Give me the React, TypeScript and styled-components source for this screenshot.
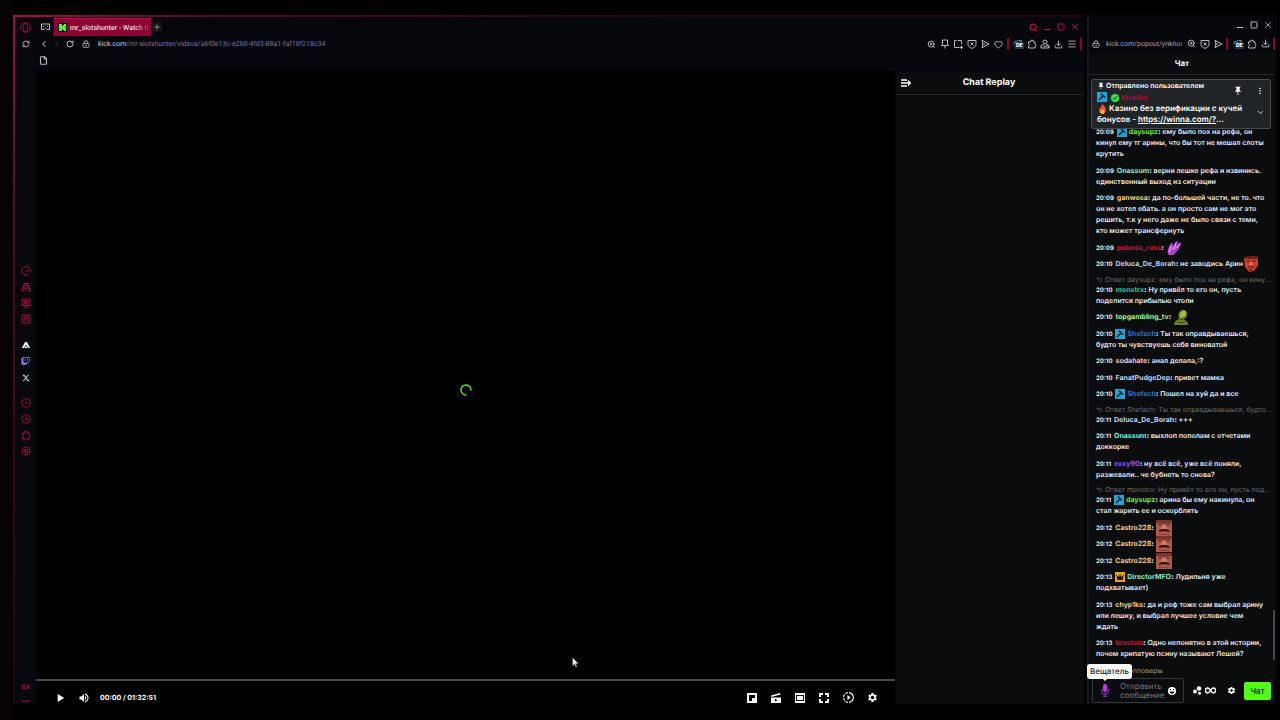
import React from "react";
import styled, { createGlobalStyle, css } from "styled-components";
import {
  RefreshCw, RotateCw, ChevronLeft, ChevronRight, ChevronDown, LockKeyhole, File, Plus, Search,
  Square, X, ZoomIn, Heart, Download, Menu, Undo2,
} from "lucide-react";
import { MdPlayArrow, MdVolumeUp, MdSettings, MdSlowMotionVideo, MdVerified, MdPushPin, MdMoreVert } from "react-icons/md";
import { FaTwitch, FaXTwitter, FaCrown } from "react-icons/fa6";

const Global = createGlobalStyle`
  * { box-sizing: border-box; }
  body {
    margin: 0;
    background: #000;
    color: #fff;
    font-family: Inter, "Noto Sans", sans-serif;
    text-rendering: geometricPrecision;
    overflow: hidden;
  }
  svg { display: block; flex: none; }
  button { font-family: inherit; }
`;

const red = "#b3083c";
const chromeFont = css`
  font-family: Roboto, Inter, sans-serif;
`;

const Desktop = styled.main`
  min-height: 100vh;
  padding: 15px 3px 16px 13px;
  display: grid;
  grid-template-columns: minmax(0, 1fr) 190px;
  gap: 3px;
  background: linear-gradient(90deg, #070305, #070305 13px, #000 13px);
`;

const MainWindow = styled.section`
  display: grid;
  grid-template-columns: 21px minmax(0, 1fr);
  background: #06060d;
  border: 0 solid;
  border-width: 2px 0 0 2px;
  border-image: linear-gradient(135deg, #a80c3e, #4a0c22 12%, #20060f 40%, #200610) 1;
`;

const IconButton = styled.button<{ $color?: string; $w?: number }>`
  display: flex;
  align-items: center;
  justify-content: center;
  width: ${(p) => p.$w ?? 10}px;
  height: 10px;
  padding: 0;
  border: 0;
  background: none;
  color: ${(p) => p.$color ?? "#b9bac2"};
  position: relative;
  flex: none;
`;

const Sidebar = styled.nav`
  display: grid;
  grid-template-rows: 1fr auto 1fr;
  justify-items: center;
  background: #07070d;
`;
const SideTop = styled.div`
  display: flex;
  flex-direction: column;
  gap: 7px;
  padding-top: 5px;
`;
const SideMiddle = styled.div`
  display: flex;
  flex-direction: column;
  gap: 15px;
  padding-top: 1px;
`;
const SideGroup = styled.div<{ $h: number }>`
  height: ${(p) => p.$h}px;
  display: flex;
  flex-direction: column;
  justify-content: space-between;
`;
const SideBottom = styled.div`
  align-self: end;
  display: flex;
  flex-direction: column;
  align-items: center;
  gap: 8px;
  color: ${red};
  font-size: 6px;
  line-height: 8px;
  font-weight: 700;
  span:last-child { line-height: 4px; }
`;

const Content = styled.div`
  display: grid;
  grid-template-rows: 20px 15px 19px minmax(0, 1fr);
`;
const TabBar = styled.header`
  display: flex;
  align-items: center;
  padding: 0 4px;
  gap: 5px;
`;
const Tab = styled.a`
  display: flex;
  align-items: center;
  gap: 3px;
  width: 97px;
  height: 18px;
  margin-left: -1px;
  padding: 0 4px;
  background: #8c0432;
  border-top: 1px solid #c00c48;
  color: #f2dfe6;
  font-size: 7px;
  font-weight: 500;
  text-decoration: none;
  white-space: nowrap;
  ${chromeFont}
`;
const TabTitle = styled.span`
  mask-image: linear-gradient(90deg, #000 80%, transparent);
`;
const NewTab = styled(IconButton)`
  background: #15151e;
  border-radius: 2px;
  margin-left: -4px;
`;
const WindowButtons = styled.div<{ $red?: boolean }>`
  margin-left: auto;
  display: flex;
  gap: 4px;
  padding-right: ${(p) => (p.$red ? "0" : "2px")};
  ${IconButton} { color: ${(p) => (p.$red ? "#c40a42" : "#b9bac2")}; }
`;
const AddressBar = styled.div`
  display: flex;
  align-items: center;
  padding: 0 0 1px 3px;
`;
const NavButtons = styled.div`
  display: flex;
  gap: 3px;
`;
const Url = styled.span`
  flex: 1;
  min-width: 0;
  padding-left: 4px;
  overflow: hidden;
  white-space: nowrap;
  font-size: 7px;
  line-height: 10px;
  color: #7b74a6;
  ${chromeFont}
  b { font-weight: 400; color: #d0d0da; }
`;
const PopUrl = styled(Url)`
  padding-left: 6px;
  color: #a3a2b8;
  margin-right: 4px;
`;
const ToolGroup = styled.div<{ $w: number }>`
  width: ${(p) => p.$w}px;
  display: flex;
  justify-content: space-between;
`;
const Divider = styled.span<{ $gap: number }>`
  width: 2px;
  height: 12px;
  background: #8c0432;
  margin: 0 ${(p) => p.$gap}px 0 3px;
`;
const Flag = styled.span`
  position: absolute;
  left: 2px;
  top: 3px;
  padding: 0 1px;
  background: #263747;
  color: #fff;
  font-size: 5px;
  line-height: 7px;
  font-weight: 800;
`;
const Bookmarks = styled.div`
  display: flex;
  align-items: center;
  padding: 0 2px 2px;
`;

const Page = styled.div`
  display: grid;
  grid-template-columns: minmax(0, 1fr) 189px;
`;
const Player = styled.section`
  position: relative;
  display: grid;
  grid-template-rows: minmax(0, 1fr) 25px;
  background: #000;
  border-radius: 4px 0 0 0;
`;
const Stage = styled.div`
  display: flex;
  align-items: center;
  justify-content: center;
  padding-top: 29px;
`;
const Controls = styled.div`
  display: flex;
  align-items: center;
  border-top: 2px solid #4b4b4b;
  padding: 10px 17px 0 18px;
`;
const PlayerButtons = styled.div`
  display: flex;
  gap: 12px;
  ${IconButton} { color: #fff; }
`;
const Time = styled.span`
  font-size: 7px;
  line-height: 12px;
  font-weight: 700;
  padding-left: 10px;
  flex: 1;
`;
const Cursor = styled.svg`
  position: absolute;
  left: 536px;
  top: 586px;
`;
const Replay = styled.aside`
  background: #0b0c0e;
  border-left: 1px solid #050506;
`;
const ReplayHead = styled.header`
  display: grid;
  grid-template-columns: 20px 1fr 22px;
  align-items: center;
  height: 24px;
  border-bottom: 1px solid #222528;
  h2 { margin: 0; font-size: 9px; line-height: 12px; text-align: center; }
`;

const Popup = styled.section`
  display: grid;
  grid-template-columns: minmax(0, 1fr);
  grid-template-rows: 20px 18px 22px minmax(0, 1fr) 44px;
  height: calc(100vh - 31px);
  background: #0b0c0e;
  border-left: 2px solid #17171b;
  border-right: 2px solid #060608;
`;
const PopTitleBar = styled.header`
  display: flex;
  align-items: center;
  background: #06060d;
`;
const PopAddress = styled(AddressBar)`
  background: #06060d;
`;
const ChatTitle = styled.h2`
  margin: 0;
  font-size: 8px;
  line-height: 21px;
  text-align: center;
  border-bottom: 1px solid #222528;
`;
const ChatArea = styled.div`
  position: relative;
  overflow: hidden;
  padding: 1px 7px 0;
`;
const Scrollbar = styled.span`
  position: absolute;
  right: 0;
  bottom: 0;
  width: 2px;
  height: 50px;
  background: #43464a;
`;
const PinCard = styled.div`
  position: absolute;
  z-index: 1;
  left: 2px;
  right: 4px;
  top: 4px;
  height: 50px;
  display: grid;
  grid-template-columns: minmax(0, 1fr) auto;
  padding: 0 5px;
  background: #202427;
  border: 1px solid #454b50;
  border-radius: 2px;
  font-size: 8px;
  line-height: 11px;
  font-weight: 600;
  white-space: nowrap;
  a { color: inherit; }
`;
const PinHead = styled.div`
  display: flex;
  align-items: center;
  gap: 1px;
  font-size: 7px;
  line-height: 12px;
`;
const PinActions = styled.div`
  display: grid;
  grid-template-columns: 10px 10px;
  column-gap: 12px;
  align-content: space-between;
  padding: 6px 0 11px;
  ${IconButton} { color: #fff; }
  ${IconButton}:last-child { grid-column: 2; }
`;
const PinLine = styled.div`
  display: flex;
  align-items: center;
  gap: 1px;
`;
const Messages = styled.ol`
  list-style: none;
  margin: 0;
  padding: 45px 0 0;
  font-size: 7px;
  line-height: 11px;
`;
const Item = styled.li`
  white-space: pre;
  font-weight: 600;
  color: #ececee;
  margin-top: 5px;
  &:nth-child(even) { margin-top: 6px; }
`;
const Stamp = styled.time`
  font-size: 6px;
  line-height: 8px;
  font-weight: 700;
  margin-right: 3px;
`;
const User = styled.b<{ $c: string }>`
  color: ${(p) => p.$c};
  font-size: 7px;
  font-weight: 700;
`;
const inlineArt = css`
  display: inline-block;
  vertical-align: middle;
`;
const Badge = styled.span<{ $bg: string }>`
  ${inlineArt}
  width: 10px;
  height: 10px;
  padding: 1px;
  margin: -2px 2px -1px 0;
  background: ${(p) => p.$bg};
  color: #14120a;
`;
const Emote = styled.span`
  ${inlineArt}
  margin: -4px 0 -4px 0;
`;
const Reply = styled.div`
  display: flex;
  align-items: center;
  gap: 2px;
  height: 9px;
  font-size: 7px;
  font-weight: 400;
  line-height: 9px;
  color: #6a6c70;
`;

const Composer = styled.form`
  display: flex;
  flex-direction: column;
  position: relative;
  padding: 0 4px 1px 3px;
`;
const Mode = styled.p`
  margin: 0;
  height: 19px;
  padding: 6px 0 0 31px;
  font-size: 7px;
  line-height: 10px;
  color: #94969a;
`;
const Tooltip = styled.span`
  position: absolute;
  left: -2px;
  top: 4px;
  padding: 0 3px;
  border-radius: 3px;
  background: #fff;
  color: #1c1d20;
  font-size: 8px;
  line-height: 15px;
  font-weight: 500;
  &::after {
    content: "";
    position: absolute;
    left: 16px;
    top: 15px;
    border: 2px solid transparent;
    border-top-color: #fff;
  }
`;
const InputRow = styled.div`
  display: flex;
  align-items: center;
  flex: 1;
`;
const InputBox = styled.label`
  display: flex;
  align-items: center;
  width: 92px;
  height: 25px;
  padding: 0 7px;
  gap: 1px;
  border: 1px solid #33373b;
  border-radius: 2px;
`;
const Field = styled.textarea`
  flex: 1;
  min-width: 0;
  height: 18px;
  padding: 0 0 0 9px;
  border: 0;
  resize: none;
  overflow: hidden;
  background: none;
  color: #fff;
  font: 400 8px/9px Inter, sans-serif;
  text-rendering: inherit;
  &::placeholder { color: #777a7f; opacity: 1; }
`;
const Extras = styled.div`
  display: flex;
  align-items: center;
  gap: 2px;
  flex: 1;
  padding: 0 8px;
  ${IconButton} { color: #fff; }
  ${IconButton}:last-child { margin-left: auto; }
`;
const Send = styled.button`
  width: 27px;
  height: 18px;
  padding: 0;
  border: 0;
  border-radius: 2px;
  background: #53fc18;
  color: #0b1a06;
  font-size: 8px;
  font-weight: 500;
`;

const Line = ({ size = 10, children }: { size?: number; children: React.ReactNode }) => (
  <svg width={size} height={size} viewBox="0 0 10 10" fill="none" stroke="currentColor" strokeWidth="1">{children}</svg>
);
const PuzzleIcon = () => (
  <Line><path d="M1.500 3h2.200a1.400 1.400 0 1 1 2.600 0h1.700v2a1.200 1.200 0 0 1 0 2.300V9H1.500V7.200a1.200 1.200 0 0 0 0-2.300z" /></Line>
);
const ShareIcon = () => <Line><path d="M2 1.300L9 5 2 8.700 2.800 5zM2.800 5h2.700" /></Line>;
const ShieldIcon = () => <Line><path d="M1 1.500h8v3.800C9 7.500 7 8.800 5 9.300 3 8.800 1 7.500 1 5.300zM3.500 3.500l3 3M6.500 3.500l-3 3" /></Line>;
const PinIcon = () => <Line><path d="M2.500 1h5v4l1 1.500h-7l1-1.500zM5 6.500V9.500" /></Line>;
const SnapshotIcon = () => <Line><path d="M3.500 1.500H1.500v7h5M5 1.500h3.500V5.500" /><path d="M7 8.500h3M8.500 7v3" /></Line>;
const ProfileIcon = () => <Line><circle cx="5" cy="3" r="2" /><path d="M1 9V6.500L3.500 5.500M6.500 5.500L9 6.500V9zM1 9h8M3.500 7.300h3" /></Line>;

const Hammer = () => (
  <svg width="8" height="8" viewBox="0 0 8 8"><path d="M3.500 0L7.800 4.300 6.300 5 5.200 3.900 1.500 7.600.4 6.500 4.100 2.800 2.300 1.200z" fill="#07222e" /></svg>
);
const Mod = () => <Badge $bg="#1fa5d8"><Hammer /></Badge>;
const Host = () => <Badge $bg="#f0a414"><FaCrown size={8} /></Badge>;

const Claws = () => (
  <svg width="16" height="16" viewBox="0 0 16 16">
    <path d="M2 14C1 10 3 7 5 3l2 1-1 4 4-7 2 1-2 5 4-5 1 2-3 6-5 5-4 0z" fill="#c44be8" />
    <path d="M3 12l3-6M6 12l4-8M9 11l4-7" stroke="#f3a9ff" fill="none" />
    <path d="M5 14l2-4M8 12l3-4" stroke="#6a1894" fill="none" />
  </svg>
);
const RedFace = () => (
  <svg width="16" height="16" viewBox="0 0 16 16">
    <path d="M1 1l14-1v9l-4 6-5 1-4-5z" fill="#c9402e" />
    <path d="M1 1l14-1v3H2z" fill="#6e1d18" />
    <path d="M3 5h4M9 5h4M5 11h6" stroke="#5d1512" strokeWidth="1.200" />
    <path d="M7 6l-1 3h4l-1-3z" fill="#ea7456" />
    <path d="M5 13h5l-1 2H7z" fill="#7a221a" />
  </svg>
);
const Frog = () => (
  <svg width="16" height="16" viewBox="0 0 16 16">
    <path d="M1 16c0-3 2-5 5-6-1-4-1-7 3-9 3-1 5 1 5 4s-2 5-4 6c3 0 5 2 5 5z" fill="#6d8420" />
    <path d="M7 8c0-4 1-6 4-6 2 0 2 2 2 3-1 3-4 4-6 3z" fill="#a9ba48" />
    <path d="M7 10l3 1M4 13l8 1" stroke="#34430f" fill="none" />
  </svg>
);
const Mustache = () => (
  <svg width="16" height="16" viewBox="0 0 16 16">
    <path d="M0 0h16v16H0z" fill="#b0584b" />
    <path d="M0 0h16v3L8 4 0 3z" fill="#7a342c" />
    <path d="M2 5h4M10 5h4" stroke="#5a241f" strokeWidth="1.200" />
    <path d="M6 5h4l1 4H5z" fill="#cf7a69" />
    <path d="M3 12c0-3 3-3 5-3s5 0 6 3c-3-1-8-1-11 0z" fill="#2c1514" />
    <path d="M3 14.500h10" stroke="#8a3f36" />
  </svg>
);
const KickLogo = () => (
  <svg width="9" height="9" viewBox="0 0 9 9">
    <path d="M0 0h9v9H0z" fill="#0a1208" />
    <path d="M1 1h3v2h1V2h1V1h2v3H7v1h1v3H6V7H5V6H4v2H1z" fill="#53fc18" />
  </svg>
);

type Msg = { t: string; u: string; c: string; m?: string; badge?: React.ReactNode; emote?: React.ReactNode; reply?: string };
const messages: Msg[] = [
  { t: "20:09", u: "daysupz", c: "#63f03a", badge: <Mod />, m: "ему было пох на рефа, он\nкинул ему тг арины, что бы тот не мешал слоты\nкрутить" },
  { t: "20:09", u: "Onassum", c: "#7ff0c8", m: "верни лешке рефа и извинись.\nединственный выход из ситуации" },
  { t: "20:09", u: "ganwosa", c: "#f2cd84", m: "да по-большей части, не то. что\nон не хотел ебать. а он просто сам не мог это\nрешить, т.к у него даже не было связи с теми,\nкто может трансфернуть" },
  { t: "20:09", u: "pobeda_russ", c: "#c2103e", emote: <Claws /> },
  { t: "20:10", u: "Deluca_De_Borah", c: "#b9d6f6", m: "не заводись Арин", emote: <RedFace /> },
  { t: "20:10", u: "monstrx", c: "#1fc79a", reply: "Ответ daysupz: ему было пох на рефа, он кину...", m: "Ну привёл то его он, пусть\nподелится прибылью чтоли" },
  { t: "20:10", u: "topgambling_tv", c: "#a4f78c", emote: <Frog /> },
  { t: "20:10", u: "Shefach", c: "#2a6fc4", badge: <Mod />, m: "Ты так оправдываешься,\nбудто ты чувствуешь себя виноватой" },
  { t: "20:10", u: "sodahate", c: "#f3c3cd", m: "анал делала,:?" },
  { t: "20:10", u: "FanatPudgeDep", c: "#b9d6f6", m: "привет мамка" },
  { t: "20:10", u: "Shefach", c: "#2a6fc4", badge: <Mod />, m: "Пошел на хуй да и все" },
  { t: "20:11", u: "Deluca_De_Borah", c: "#b9d6f6", reply: "Ответ Shefach: Ты так оправдываешься, будто...", m: "+++" },
  { t: "20:11", u: "Onassum", c: "#7ff0c8", m: "выхлоп пополам с отчетами\nдоккорке" },
  { t: "20:11", u: "exxy90", c: "#9a4df0", m: "ну всё всё, уже всё поняли,\nразжевали.. че бубнеть то снова?" },
  { t: "20:11", u: "daysupz", c: "#63f03a", badge: <Mod />, reply: "Ответ monstrx: Ну привёл то его он, пусть под...", m: "арина бы ему накинула, он\nстал жарить ее и оскорблять" },
  { t: "20:12", u: "Castro228", c: "#f2cd84", emote: <Mustache /> },
  { t: "20:12", u: "Castro228", c: "#f2cd84", emote: <Mustache /> },
  { t: "20:12", u: "Castro228", c: "#f2cd84", emote: <Mustache /> },
  { t: "20:13", u: "DirectorMFO", c: "#7ff0c8", badge: <Host />, m: "Лудильня уже\nподхватывает)" },
  { t: "20:13", u: "chyp1ks", c: "#f2cd84", m: "да и реф тоже сам выбрал арину\nили лешку, и выбрал лучшее условие чем\nждать" },
  { t: "20:13", u: "brestois", c: "#c2103e", m: "Одно непонятно в этой истории,\nпочем хрипатую псину называют Лешей?" },
];

const Vpn = () => (
  <IconButton aria-label="VPN" $color="#7f9aa6">
    <Line><path d="M1 5V3.500L3 2M3 3.500L5 1M6 1.500h2.500L7.500 3.500" /></Line>
    <Flag>DE</Flag>
  </IconButton>
);

export default function App() {
  return (
    <>
      <Global />
      <Desktop>
        <MainWindow>
          <Sidebar>
            <SideTop>
              <IconButton aria-label="Opera" $color={red}>
                <svg width="11" height="11" viewBox="0 0 11 11" fill="none" stroke="currentColor"><circle cx="5.500" cy="5.500" r="4.800" /><ellipse cx="5.500" cy="5.500" rx="2.200" ry="4.200" /></svg>
              </IconButton>
              <IconButton aria-label="Sync"><RefreshCw size={8} strokeWidth={2.5} /></IconButton>
            </SideTop>
            <SideMiddle>
              <SideGroup $h={59}>
                <IconButton aria-label="GX Control" $color={red}><Line><path d="M7.500 8.500A4.300 4.300 0 1 1 8.500 2.500M5 5.500L8.500 3.500M9.200 4v2" /></Line></IconButton>
                <IconButton aria-label="Mods" $color={red}><Line><path d="M3 4V1.500h4V4M2 4h6v2H2zM1 9l1-3M9 9L8 6M.5 9h3M6.500 9h3M5 6v2" /></Line></IconButton>
                <IconButton aria-label="Player" $color={red}><Line><path d="M1 1h8v6.500H1zM3 9h4M2.500 3h5M2.500 5h5M4 2v4M6 2v4" /></Line></IconButton>
                <IconButton aria-label="Messages" $color={red}><Line><path d="M1 1h8v8H1zM3 7V4l2 1.500L7 4v3M3 2.700h4" /></Line></IconButton>
              </SideGroup>
              <SideGroup $h={43}>
                <IconButton aria-label="Aria" $color="#fff">
                  <svg width="8" height="8" viewBox="0 0 8 8"><path d="M3 1h2l3 6H6L4 3.400 2 7H0zM3 5.400h2V7H3z" fill="currentColor" /></svg>
                </IconButton>
                <IconButton aria-label="Twitch" $color="#9b7bf0"><FaTwitch size={9} /></IconButton>
                <IconButton aria-label="X" $color="#d6d6da"><FaXTwitter size={8} /></IconButton>
              </SideGroup>
              <SideGroup $h={59}>
                <IconButton aria-label="Pinboards" $color={red}><Line><circle cx="5" cy="5" r="4.200" /><circle cx="5" cy="5" r=".6" /></Line></IconButton>
                <IconButton aria-label="History" $color={red}><Line><circle cx="5" cy="5" r="4.200" /><path d="M5 2.500V5.500h2" /></Line></IconButton>
                <IconButton aria-label="Extensions" $color={red}><PuzzleIcon /></IconButton>
                <IconButton aria-label="Settings" $color={red}>
                  <Line><path d="M5 .6l3.800 2.200v4.400L5 9.400 1.200 7.200V2.800z" /><circle cx="5" cy="5" r="1.700" /></Line>
                </IconButton>
              </SideGroup>
            </SideMiddle>
            <SideBottom><span>GX</span><span>•••</span></SideBottom>
          </Sidebar>
          <Content>
            <TabBar>
              <IconButton aria-label="Workspace">
                <svg width="9" height="8" viewBox="0 0 9 8" fill="none" stroke="currentColor"><path d="M.5 1h8v5.500H6L4.500 5 3 6.500H.5z" /><path d="M2 3.500h1M6 3.500h1" /></svg>
              </IconButton>
              <Tab href="#"><KickLogo /><TabTitle>mr_slotshunter - Watch th</TabTitle></Tab>
              <NewTab aria-label="New tab"><Plus size={8} /></NewTab>
              <WindowButtons $red>
                <IconButton aria-label="Search tabs"><Search size={9} strokeWidth={3} /></IconButton>
                <IconButton aria-label="Minimize"><svg width="8" height="8" viewBox="0 0 8 8"><path d="M1 6.500h6" stroke="currentColor" /></svg></IconButton>
                <IconButton aria-label="Maximize"><Square size={8} strokeWidth={3} /></IconButton>
                <IconButton aria-label="Close"><X size={10} /></IconButton>
              </WindowButtons>
            </TabBar>
            <AddressBar>
              <NavButtons>
                <IconButton aria-label="Back"><ChevronLeft size={10} strokeWidth={2.5} /></IconButton>
                <IconButton aria-label="Forward" $color="#3c3c46"><ChevronRight size={10} /></IconButton>
                <IconButton aria-label="Reload"><RotateCw size={8} strokeWidth={3} /></IconButton>
                <IconButton aria-label="Site information" $w={16}><LockKeyhole size={8} strokeWidth={2.5} /></IconButton>
              </NavButtons>
              <Url><b>kick.com</b>/mr-slotshunter/videos/a6f0e13c-e2b0-4fd3-88a1-faf18f218c34</Url>
              <ToolGroup $w={78}>
                <IconButton aria-label="Zoom"><ZoomIn size={9} strokeWidth={2.5} /></IconButton>
                <IconButton aria-label="Pin page"><PinIcon /></IconButton>
                <IconButton aria-label="Snapshot"><SnapshotIcon /></IconButton>
                <IconButton aria-label="Ad blocker"><ShieldIcon /></IconButton>
                <IconButton aria-label="Share"><ShareIcon /></IconButton>
                <IconButton aria-label="Favourite"><Heart size={9} strokeWidth={2.5} /></IconButton>
              </ToolGroup>
              <Divider $gap={4} />
              <ToolGroup $w={64}>
                <Vpn />
                <IconButton aria-label="Extensions"><PuzzleIcon /></IconButton>
                <IconButton aria-label="Profile"><ProfileIcon /></IconButton>
                <IconButton aria-label="Downloads"><Download size={9} strokeWidth={2.5} /></IconButton>
                <IconButton aria-label="Menu"><Menu size={10} /></IconButton>
              </ToolGroup>
              <Divider $gap={2} />
            </AddressBar>
            <Bookmarks><IconButton aria-label="Bookmark"><File size={9} strokeWidth={3} /></IconButton></Bookmarks>
            <Page>
              <Player>
                <Stage>
                  <svg width="12" height="12" viewBox="0 0 12 12" fill="none"><path d="M6.500 10.900A5 5 0 1 1 10.900 6.600" stroke="#5fd83c" strokeWidth="1.500" /></svg>
                </Stage>
                <Controls>
                  <PlayerButtons>
                    <IconButton $w={12} aria-label="Play"><MdPlayArrow size={14} /></IconButton>
                    <IconButton $w={12} aria-label="Volume"><MdVolumeUp size={12} /></IconButton>
                  </PlayerButtons>
                  <Time>00:00 / 01:32:51</Time>
                  <PlayerButtons>
                    <IconButton $w={12} aria-label="Mini player"><svg width="10" height="10" viewBox="0 0 10 10"><path d="M0 0h10v10H0zM2 2v6h6V2z" fillRule="evenodd" fill="currentColor" /><path d="M5 5h3v3H5z" fill="currentColor" /></svg></IconButton>
                    <IconButton $w={12} aria-label="Clip"><svg width="10" height="10" viewBox="0 0 10 10"><path d="M0 2.500L9 0l.5 1.500L.5 4zM0 4.500h10V10H0zM4 5.800v2.700L6.500 7.200z" fillRule="evenodd" fill="currentColor" /></svg></IconButton>
                    <IconButton $w={12} aria-label="Theatre mode"><svg width="10" height="10" viewBox="0 0 10 10"><path d="M0 0h10v10H0zM1 1v8h8V1z" fillRule="evenodd" fill="currentColor" /><path d="M0 0h10v2H0zM0 8h10v2H0zM2 3h6v4H2z" fill="currentColor" /></svg></IconButton>
                    <IconButton $w={12} aria-label="Fullscreen"><svg width="10" height="10" viewBox="0 0 10 10" fill="none" stroke="currentColor" strokeWidth="2"><path d="M1 4V1h3M6 1h3v3M9 6v3H6M4 9H1V6" /></svg></IconButton>
                    <IconButton $w={12} aria-label="Playback speed"><MdSlowMotionVideo size={13} /></IconButton>
                    <IconButton $w={12} aria-label="Settings"><MdSettings size={11} /></IconButton>
                  </PlayerButtons>
                </Controls>
                <Cursor width="7" height="11" viewBox="0 0 7 11"><path d="M.5.5v8.500l2-1.800 1.300 3 1.300-.6-1.300-2.900h2.700z" fill="#eee" stroke="#333" strokeWidth=".5" /></Cursor>
              </Player>
              <Replay>
                <ReplayHead>
                  <IconButton aria-label="Collapse chat" $w={20} $color="#fff"><svg width="10" height="8" viewBox="0 0 10 8" fill="none" stroke="currentColor" strokeWidth="1.300"><path d="M0 1h6M0 4h9M0 7h6M7 1.500L9.300 4 7 6.500" /></svg></IconButton>
                  <h2>Chat Replay</h2>
                </ReplayHead>
              </Replay>
            </Page>
          </Content>
        </MainWindow>

        <Popup>
          <PopTitleBar>
            <WindowButtons>
              <IconButton aria-label="Minimize"><svg width="8" height="8" viewBox="0 0 8 8"><path d="M1 6.500h6" stroke="currentColor" /></svg></IconButton>
              <IconButton aria-label="Maximize"><Square size={8} strokeWidth={3} /></IconButton>
              <IconButton aria-label="Close"><X size={10} /></IconButton>
            </WindowButtons>
          </PopTitleBar>
          <PopAddress>
            <IconButton aria-label="Site information" $w={8}><LockKeyhole size={8} strokeWidth={2.5} /></IconButton>
            <PopUrl>kick.com/popout/ynknow</PopUrl>
            <ToolGroup $w={37}>
              <IconButton aria-label="Zoom"><ZoomIn size={9} strokeWidth={2.5} /></IconButton>
              <IconButton aria-label="Ad blocker"><ShieldIcon /></IconButton>
              <IconButton aria-label="Share"><ShareIcon /></IconButton>
            </ToolGroup>
            <Divider $gap={5} />
            <ToolGroup $w={37}>
              <Vpn />
              <IconButton aria-label="Extensions"><PuzzleIcon /></IconButton>
              <IconButton aria-label="Downloads"><Download size={9} strokeWidth={2.5} /></IconButton>
            </ToolGroup>
            <Divider $gap={0} />
          </PopAddress>
          <ChatTitle>Чат</ChatTitle>
          <ChatArea>
            <PinCard>
              <div>
                <PinHead><MdPushPin size={8} />Отправлено пользователем</PinHead>
                <PinLine>
                  <Mod /><MdVerified size={10} color="#2ee84a" /><User $c="#b3083c">KickBot</User>
                </PinLine>
                <PinLine>
                  <svg width="11" height="10" viewBox="0 0 11 10"><path d="M5 0c3 2 4 4 4 6S7.500 10 5.500 10 2 8.500 2 6.500 4 4 5 0z" fill="#e8502a" /><path d="M5.500 4.500c1.500 1.500 2 2.500 2 3.500S6.500 10 5.500 10s-2-.8-2-2 1.500-1.500 2-3.500z" fill="#ffb636" /></svg>
                  Казино без верификации с кучей
                </PinLine>
                <div>бонусов - <a href="#">https://winna.com/?</a>...</div>
              </div>
              <PinActions>
                <IconButton aria-label="Unpin"><MdPushPin size={10} /></IconButton>
                <IconButton aria-label="More"><MdMoreVert size={10} /></IconButton>
                <IconButton aria-label="Expand"><ChevronDown size={9} /></IconButton>
              </PinActions>
            </PinCard>
            <Messages>
              {messages.map((m, i) => (
                <Item key={i}>
                  {m.reply && <Reply><Undo2 size={7} />{m.reply}</Reply>}
                  <Stamp>{m.t}</Stamp>{m.badge}<User $c={m.c}>{m.u}</User><b>:</b> {m.m}
                  {m.emote && <Emote>{m.emote}</Emote>}
                </Item>
              ))}
            </Messages>
            <Scrollbar />
          </ChatArea>
          <Composer onSubmit={(e) => e.preventDefault()}>
            <Mode>Фолловеры</Mode>
            <Tooltip role="tooltip">Вещатель</Tooltip>
            <InputRow>
              <InputBox>
                <svg width="10" height="13" viewBox="0 0 10 13"><rect x="3" y="0" width="4" height="8" rx="2" fill="#c436ea" /><path d="M1.500 5v1.500a3.500 3.500 0 0 0 7 0V5M5 10v2.500M3 12.500h4" fill="none" stroke="#8a1fc0" strokeWidth="1.300" /></svg>
                <Field aria-label="Сообщение" placeholder="Отправить сообщение" />
                <svg width="8" height="8" viewBox="0 0 8 8"><circle cx="4" cy="4" r="4" fill="#fff" /><path d="M1.800 4.500h4.400a2.200 2.200 0 0 1-4.400 0zM2 2h1v1H2zM5 2h1v1H5z" fill="#0b0c0e" /></svg>
              </InputBox>
              <Extras>
                <IconButton aria-label="Points"><svg width="9" height="9" viewBox="0 0 9 9" fill="currentColor"><circle cx="6" cy="2.500" r="2.300" /><circle cx="2" cy="5.500" r="1.900" /><circle cx="6.500" cy="7.300" r="1.500" /></svg></IconButton>
                <IconButton aria-label="Unlimited" $w={12}><svg width="11" height="7" viewBox="0 0 11 7" fill="none" stroke="currentColor" strokeWidth="1.400"><path d="M5.500 3.500C4.500 2 4 1 2.800 1a2.500 2.500 0 0 0 0 5C4 6 4.500 5 5.500 3.500S7 1 8.200 1a2.500 2.500 0 0 1 0 5C7 6 6.500 5 5.500 3.500z" /></svg></IconButton>
                <IconButton aria-label="Chat settings"><MdSettings size={9} /></IconButton>
              </Extras>
              <Send type="submit">Чат</Send>
            </InputRow>
          </Composer>
        </Popup>
      </Desktop>
    </>
  );
}
